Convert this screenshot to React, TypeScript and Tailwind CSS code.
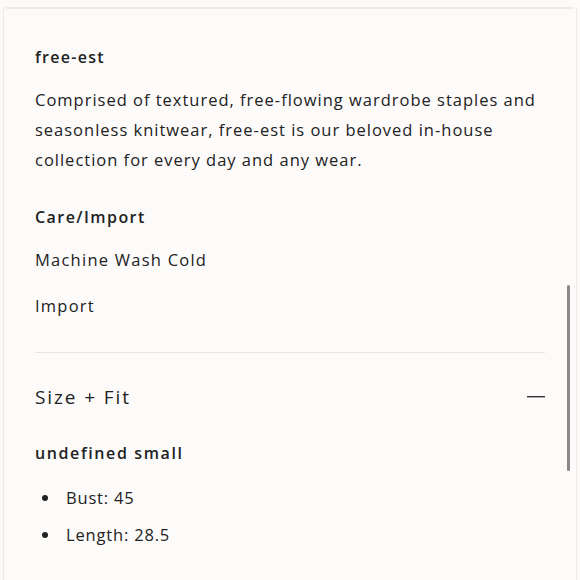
import React from "react";

const font = { fontFamily: '"Open Sans", "Liberation Sans", sans-serif' };

const bullets = ["Bust: 45", "Length: 28.5"];

export default function App() {
  return (
    <div
      className="relative h-[580px] w-[580px] overflow-hidden bg-[#fdfbfa] text-[#222]"
      style={font}
    >
      <div className="mx-[3px] h-full border-x border-[#efe9e9] bg-[#fdfbfa]">
        <div className="mx-[2px] mt-[7px] border-t-2 border-[#eeeae8]" />

        <div className="px-[31px] pt-[35px]">
          {/* Details */}
          <h3 className="text-[16px] font-semibold leading-[26px] tracking-[0.08em]">free-est</h3>
          <p className="mt-[15px] text-[16.5px] leading-[30px] tracking-[0.06em]">
            Comprised of textured, free-flowing wardrobe staples and seasonless knitwear, free-est
            is our beloved in-house collection for every day and any wear.
          </p>

          <h3 className="mt-[29px] text-[16px] font-semibold leading-[26px] tracking-[0.09em]">
            Care/Import
          </h3>
          <p className="mt-[17px] text-[16.5px] leading-[26px] tracking-[0.075em]">Machine Wash Cold</p>
          <p className="mt-[20px] text-[16.5px] leading-[26px] tracking-[0.075em]">Import</p>

          <div className="mt-[33px] border-t border-[#e8e4e2]" />

          {/* Size + Fit */}
          <div className="mt-[30px] flex items-center justify-between">
            <span className="text-[19px] leading-[28px] tracking-[0.1em]">Size + Fit</span>
            <svg width="18" height="2" viewBox="0 0 18 2">
              <rect width="18" height="1.4" fill="#333" />
            </svg>
          </div>

          <h3 className="mt-[29px] text-[16px] font-semibold leading-[26px] tracking-[0.1em]">
            undefined small
          </h3>
          <ul className="mt-[19px] space-y-[11px]">
            {bullets.map((b) => (
              <li key={b} className="flex items-center text-[16.5px] leading-[26px] tracking-[0.05em]">
                <span className="ml-[7px] mr-[18px] h-[6px] w-[6px] rounded-full bg-[#222]" />
                {b}
              </li>
            ))}
          </ul>
        </div>
      </div>

      {/* scrollbar */}
      <div className="absolute left-[567px] top-[285px] h-[186px] w-[3px] rounded-full bg-[#8a8888]" />
    </div>
  );
}
